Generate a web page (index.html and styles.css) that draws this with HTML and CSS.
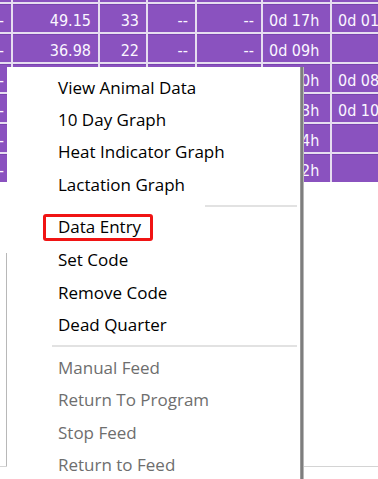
FILE: index.html
```html
<!DOCTYPE html>
<html lang="en">
<head>
    <meta charset="UTF-8">
    <meta name="viewport" content="width=device-width, initial-scale=1.0">
    <title>Feed Status</title>
    <link rel="stylesheet" href="styles.css">
</head>
<body>
    <!-- Feed grid (scrolled, only part of it shows) -->
    <div class="grid-wrap">
        <div class="feed-grid">
            <div class="cell"></div><div class="cell"></div><div class="cell"></div><div class="cell"></div><div class="cell"></div><div class="cell left"></div><div class="cell left"></div>

            <div class="cell">-</div><div class="cell">49.15</div><div class="cell">33</div><div class="cell">--</div><div class="cell">--</div><div class="cell left">0d 17h</div><div class="cell left">0d 01h</div>
            <div class="cell">-</div><div class="cell">36.98</div><div class="cell">22</div><div class="cell">--</div><div class="cell">--</div><div class="cell left">0d 09h</div><div class="cell left"></div>
            <div class="cell">-</div><div class="cell">41.20</div><div class="cell">30</div><div class="cell">--</div><div class="cell">--</div><div class="cell left">0d 10h</div><div class="cell left">0d 08h</div>
            <div class="cell">-</div><div class="cell">38.44</div><div class="cell">27</div><div class="cell">--</div><div class="cell">--</div><div class="cell left">0d 13h</div><div class="cell left">0d 10h</div>
            <div class="cell">-</div><div class="cell">45.02</div><div class="cell">31</div><div class="cell">--</div><div class="cell">--</div><div class="cell left">0d 14h</div><div class="cell left"></div>
            <div class="cell">-</div><div class="cell">29.87</div><div class="cell">18</div><div class="cell">--</div><div class="cell">--</div><div class="cell left">0d 12h</div><div class="cell left"></div>
        </div>
    </div>

    <div class="lower">
        <div class="lower-gap"></div>
        <div class="lower-frame"></div>
    </div>

    <!-- Right-click menu -->
    <div class="context-menu">
        <div class="menu-item">View Animal Data</div>
        <div class="menu-item">10 Day Graph</div>
        <div class="menu-item">Heat Indicator Graph</div>
        <div class="menu-item">Lactation Graph</div>
        <div class="menu-sep cut"><span></span></div>
        <div class="menu-item"><span class="mark">Data Entry</span></div>
        <div class="menu-item">Set Code</div>
        <div class="menu-item">Remove Code</div>
        <div class="menu-item">Dead Quarter</div>
        <div class="menu-sep"><span></span></div>
        <div class="menu-item off">Manual Feed</div>
        <div class="menu-item off">Return To Program</div>
        <div class="menu-item off">Stop Feed</div>
        <div class="menu-item off">Return to Feed</div>
    </div>
</body>
</html>
```

FILE: styles.css
```css
html, body {
    margin: 0;
    height: 100%;
    overflow: hidden;
    background: #ffffff;
}

* {
    box-sizing: border-box;
}

/* Feed grid */
.grid-wrap {
    overflow: hidden;
}

.feed-grid {
    display: grid;
    grid-template-columns: 51px 85px 46px 47px 64px 67px 88px;
    grid-auto-rows: 28px;
    gap: 2px;
    background: #e6def0;
    margin: -26px 0 0 -40px;
    width: max-content;
}

.cell {
    background: #8a52bf;
    box-shadow: inset 0 1px 0 #7a43b0;
    color: #fbf7ff;
    font-family: "DejaVu Sans Condensed", "DejaVu Sans", sans-serif;
    font-size: 16px;
    display: flex;
    align-items: center;
    justify-content: flex-end;
    padding: 5px 7px 0 6px;
    white-space: nowrap;
}

.cell.left {
    justify-content: flex-start;
}

/* Panel under the grid */
.lower {
    height: 285px;
    border-bottom: 1px solid #d4d4d4;
    display: flex;
    flex-direction: column;
}

.lower-gap {
    height: 71px;
}

.lower-frame {
    flex: 1;
    margin-left: 6px;
    border-left: 1px solid #b8b8b8;
}

/* Context menu */
.context-menu {
    position: absolute;
    left: 7px;
    top: 67px;
    width: 293px;
    bottom: 0;
    overflow: hidden;
    background: #ffffff;
    padding-top: 4px;
    box-shadow: 1px 0 0 #9a9a9a, 3px 0 0 #7e7e7e, 4px 0 0 #b8b8b8;
    font-family: "Open Sans", "Noto Sans", sans-serif;
    font-size: 17px;
    font-weight: 500;
}

.menu-item {
    height: 32.4px;
    display: flex;
    align-items: center;
    padding-left: 51px;
    color: #000000;
    white-space: nowrap;
}

.menu-item.off {
    color: #6e6e6e;
}

.menu-sep {
    height: 10.6px;
    display: flex;
    align-items: center;
    padding: 0 3px 0 45px;
}

.menu-sep.cut {
    padding-left: 198px;
}

.menu-sep span {
    flex: 1;
    height: 2px;
    background: #e2e2e2;
}

/* red highlight round one entry */
.mark {
    border: 3px solid #f01414;
    border-radius: 3px;
    line-height: 20px;
    padding: 0 9px 1px 12px;
    margin-left: -15px;
}
```
